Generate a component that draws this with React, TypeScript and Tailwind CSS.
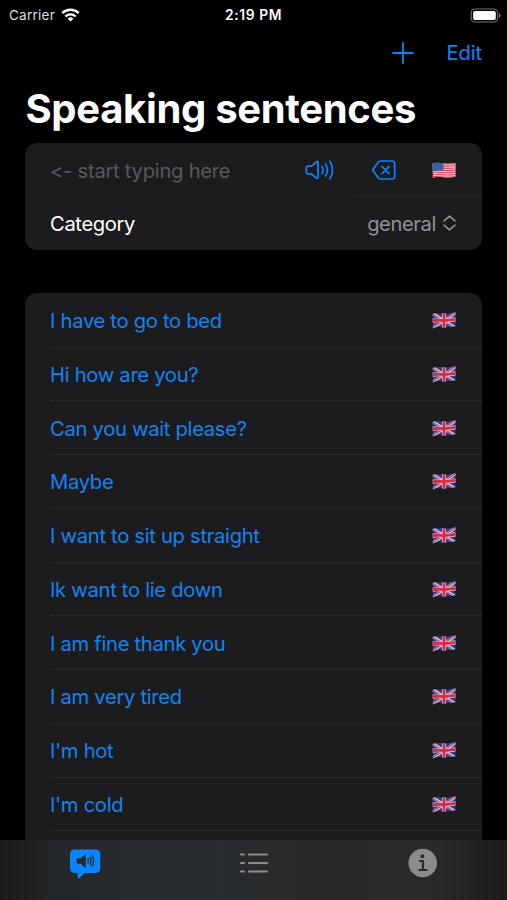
import React from 'react';

const sentences = [
  'I have to go to bed',
  'Hi how are you?',
  'Can you wait please?',
  'Maybe',
  'I want to sit up straight',
  'Ik want to lie down',
  'I am fine thank you',
  'I am very tired',
  "I'm hot",
  "I'm cold"
];

const UnitedKingdomFlag: React.FC = () => (
  <svg className="h-[17px] w-6" viewBox="0 0 24 17" fill="none">
    <clipPath id="uk-wave">
      <path d="M.5 2.2C5 .2 8 1.4 12 1.6s7-.8 11.5-1v13.6c-4.500 .4-7.500 1.400-11.500 1.200S5 14.400 .9 16.400z" />
    </clipPath>
    <g clipPath="url(#uk-wave)">
      <path fill="#24408c" d="M0 0h24v17H0z" />
      <path stroke="#cdc6da" strokeWidth="2.800" d="M0 1l24 15M0 16.500L24 .5" />
      <path stroke="#cc3a56" strokeWidth="1.100" d="M0 1.600l24 15M0 16L24 0" />
      <path stroke="#dcc6d4" strokeWidth="4.200" d="M12 0v17M0 9c5-1.500 8-.4 12-.4s7-.8 12-1.300" />
      <path stroke="#d62c49" strokeWidth="2.800" d="M12 0v17M0 9c5-1.500 8-.4 12-.4s7-.8 12-1.300" />
    </g>
  </svg>
);

const UnitedStatesFlag: React.FC = () => (
  <svg className="h-[17px] w-6" viewBox="0 0 24 17" fill="none">
    <clipPath id="us-wave">
      <path d="M.5 1.800C5 0 8 1.200 12 1.500s7 .2 11.500-.7v13.800c-4.500 1.200-7.500 1-11.500 .6S5 14.200 .9 16z" />
    </clipPath>
    <g clipPath="url(#us-wave)">
      <path fill="#efd3d6" d="M0 0h24v17H0z" />
      <g stroke="#dc4257" strokeWidth="1.150">
        <path d="M0 2C5 .3 8 1.700 12 1.900s7 .2 12-.6" />
        <path d="M0 4.200c5-1.700 8-.3 12-.1s7 .2 12-.6" />
        <path d="M0 6.400c5-1.700 8-.3 12-.1s7 .2 12-.6" />
        <path d="M0 8.600c5-1.700 8-.3 12-.1s7 .2 12-.6" />
        <path d="M0 10.800c5-1.700 8-.3 12-.1s7 .2 12-.6" />
        <path d="M0 13c5-1.700 8-.3 12-.1s7 .2 12-.6" />
        <path d="M0 15.200c5-1.700 8-.3 12-.1s7 .2 12-.6" />
      </g>
      <path fill="#355c9e" d="M0 0h11.500v8.700C7.500 8.400 5 8 0 9.400z" />
      <path stroke="#6283b8" strokeWidth=".7" strokeDasharray=".8 1.200" d="M1.500 3.300L11 2.700M2.200 5.200L11 4.500M1.500 7.100L11 6.400" />
    </g>
  </svg>
);

const StatusBar: React.FC = () => (
  <div className="grid h-[28px] grid-cols-3 items-center pb-[2px] text-[13.5px] text-white">
    <div className="flex items-center gap-[6px] pl-[9px] text-[#dedede]">
      <span className="tracking-[0.25px]">Carrier</span>
      <svg className="h-[14px] w-[19px]" viewBox="0 0 19 14" fill="none" stroke="#fff">
        <path strokeWidth="2.400" d="M1.300 5.100a11.700 11.700 0 0116.400 0" />
        <path strokeWidth="2.400" d="M4.400 8.500a7.200 7.200 0 0110.200 0" />
        <path fill="#fff" stroke="none" d="M9.500 13.600L6.600 10.700a4.100 4.100 0 015.800 0z" />
      </svg>
    </div>
    <span className="pb-px text-center text-[13.8px] font-semibold leading-[26px] tracking-[0.6px]">2:19 PM</span>
    <div className="flex justify-end pr-[6px]">
      <svg className="h-[15px] w-[31px]" viewBox="0 0 31 15" fill="none">
        <rect x="1.200" y="1" width="26.500" height="13" rx="4" stroke="#777" strokeWidth="1.100" />
        <rect x="3.100" y="2.900" width="22.700" height="9.200" rx="2.200" fill="#fff" />
        <path fill="#777" d="M29 5.200c2.200 .8 2.200 3.800 0 4.600z" />
      </svg>
    </div>
  </div>
);

const EntryForm: React.FC = () => (
  <section className="mx-[25px] h-[107.500px] rounded-[12px] bg-[#1c1c1e]">
    <div className="flex h-[53.750px] items-center pl-[25px] pt-[2px]">
      <span className="w-[255px] pt-px tracking-[-0.26px] text-[#58585b]">&lt;- start typing here</span>
      <svg className="h-[22px] w-[30px] text-[#0a84ff]" viewBox="0 0 30 22" fill="none" stroke="currentColor" strokeWidth="1.700" strokeLinecap="round" strokeLinejoin="round">
        <path d="M3 7.200h3.500l5.200-4.500c.6-.5 1.300-.3 1.300 .5v15.600c0 .8-.7 1-1.300 .5l-5.200-4.500H3c-1 0-1.700-.6-1.700-1.600V8.800c0-1 .7-1.600 1.700-1.600z" />
        <path d="M17 7.500a6.600 6.600 0 010 7M20.500 4.900a11.500 11.500 0 010 12.200M24.900 2.300a16 16 0 010 17.400" />
      </svg>
      <svg className="ml-[37px] h-[20px] w-[24px] text-[#0a84ff]" viewBox="0 0 24 20" fill="none" stroke="currentColor" strokeWidth="1.700" strokeLinecap="round" strokeLinejoin="round">
        <path d="M8.600 1h11.600a2.500 2.500 0 012.500 2.500v13a2.500 2.500 0 01-2.500 2.500H8.600c-.8 0-1.400-.3-2-.8L1.700 11.600c-1.100-1.100-1.100-2.100 0-3.200l4.900-6.600c.6-.5 1.200-.8 2-.8z" />
        <path d="M9.900 6.400l7.200 7.200M17.100 6.400l-7.200 7.200" />
      </svg>
      <div className="ml-[36px]">
        <UnitedStatesFlag />
      </div>
    </div>
    <div className="flex">
      <div className="h-[53.750px] w-[330px] pl-[25px] pt-[13px] tracking-[-0.37px] text-white">Category</div>
      <div className="flex flex-1 justify-end border-t border-[#29292b] pr-[26px] pt-[12px] text-[#919196]">
        <span className="tracking-[-0.4px]">general</span>
        <svg className="ml-[7px] mt-[6px] h-[16px] w-[13px]" viewBox="0 0 13 16" fill="none" stroke="currentColor" strokeWidth="1.600" strokeLinecap="round" strokeLinejoin="round">
          <path d="M1 5.800l5.500-4.700L12 5.800M1 10.200l5.500 4.700 5.500-4.700" />
        </svg>
      </div>
    </div>
  </section>
);

const SentenceList: React.FC = () => (
  <section className="mx-[25px] mt-[43px] rounded-t-[12px] bg-[#1c1c1e] pb-[10px] pl-[25px] pt-[0.9px]">
    {sentences.map((sentence) => (
      <div key={sentence} className="flex h-[53.740px] items-center justify-between border-b border-[#29292b] pr-[26px] pt-px">
        <span className="pt-px tracking-[-0.3px] text-[#1383f2]">{sentence}</span>
        <UnitedKingdomFlag />
      </div>
    ))}
  </section>
);

const TabBar: React.FC = () => (
  <nav className="grid h-[60px] w-full shrink-0 grid-cols-3 justify-items-center bg-[linear-gradient(to_right,#1b1b1b_0%,#24272a_12%,#272c32_28%,#292c2f_48%,#292929_60%,#2b2a2a_85%,#1c1c1c_100%)] pt-[8px] text-[#8c8c8c]">
    <svg className="h-[32px] w-[32px]" viewBox="0 0 32 32" fill="none">
      <path fill="#0a84ff" d="M5.500 1.500h21.300a4.500 4.500 0 014.500 4.500v14.500a4.500 4.500 0 01-4.500 4.500H15.500l-5 4.900c-.9 .9-1.800 .5-1.800-.7V25H5.500A4.500 4.500 0 011 20.500V6a4.500 4.500 0 014.500-4.500z" />
      <path fill="#242a30" d="M8.900 10.200h2.700l4-3.500c.7-.6 1.200-.4 1.200 .4v11.800c0 .8-.5 1-1.200 .4l-4-3.500H8.900c-.8 0-1.300-.5-1.300-1.200v-3.200c0-.7 .5-1.200 1.300-1.200z" />
      <path stroke="#242a30" strokeWidth="1.300" strokeLinecap="round" d="M18.900 10.900a4.800 4.800 0 010 4.200M21 9.300a8 8 0 010 7.400M23.200 7.900a11 11 0 010 10.200" />
    </svg>
    <svg className="mt-[4px] h-[24px] w-[30px]" viewBox="0 0 30 24" stroke="currentColor" strokeWidth="2.100" strokeLinecap="round">
      <path d="M2 2.500h3M10 2.500h18M2 11h3M10 11h18M2 19.500h3M10 19.500h18" />
    </svg>
    <svg className="h-[30px] w-[30px]" viewBox="0 0 30 30">
      <circle cx="14.700" cy="15" r="14.300" fill="currentColor" />
      <circle cx="14.400" cy="8.300" r="2" fill="#29292a" />
      <path stroke="#29292a" strokeWidth="2.200" fill="none" strokeLinecap="round" strokeLinejoin="round" d="M11.900 13h3.100v8.900M11.600 22h6.800" />
    </svg>
  </nav>
);

export default function App() {
  return (
    <div className="flex h-[900px] w-[507px] flex-col overflow-hidden bg-black font-['Inter',sans-serif] text-[20.2px] leading-[30px]">
      <StatusBar />
      <div className="min-h-0 flex-1 overflow-hidden">
        <header className="flex h-[50px] items-center justify-end gap-[32px] pr-[25px] text-[#0a84ff]">
          <svg className="h-[22px] w-[22px]" viewBox="0 0 22 22" stroke="currentColor" strokeWidth="1.800" strokeLinecap="round">
            <path d="M11 1v20M1 11h20" />
          </svg>
          <button className="tracking-[-0.1px]">Edit</button>
        </header>
        <h1 className="h-[64.500px] pl-[25.500px] pt-[6px] text-[40px] font-bold leading-[50px] tracking-[-0.320px] text-white">Speaking sentences</h1>
        <EntryForm />
        <SentenceList />
      </div>
      <TabBar />
    </div>
  );
}
